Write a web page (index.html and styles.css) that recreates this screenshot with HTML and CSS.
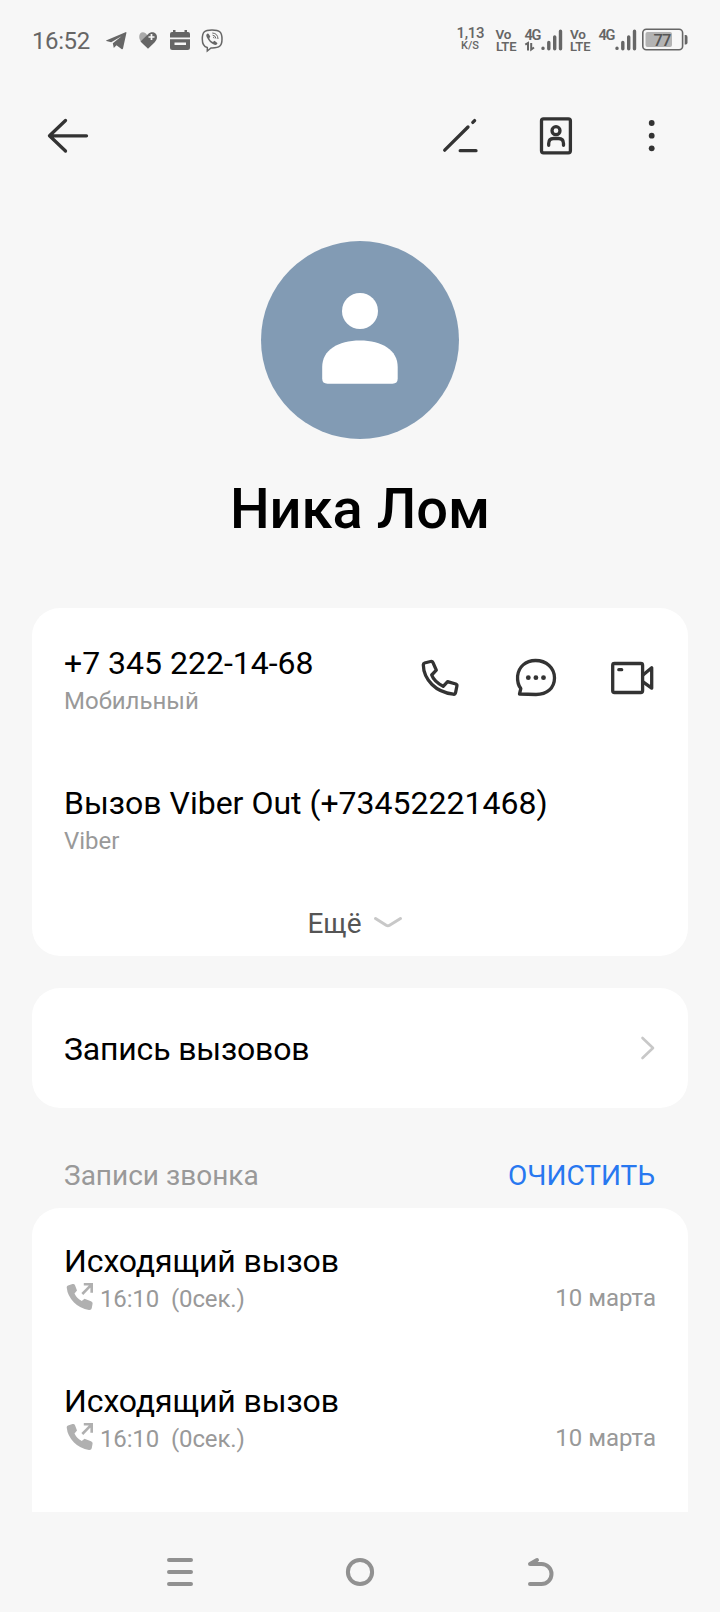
FILE: index.html
```html
<!DOCTYPE html>
<html lang="ru">
<head>
<meta charset="utf-8">
<title>Ника Лом</title>
<link rel="stylesheet" href="styles.css">
</head>
<body>
<div class="screen">
  <header class="status">
    <span class="clock">16:52</span>
    <svg class="notes" width="120" height="28" viewBox="104 26 120 28">
      <path d="M106 40.5L125.5 32.2Q126.6 31.8 126.4 33L123 48.6Q122.6 49.8 121.5 49L116.5 45.3L113.8 48L112.8 43.2L121.5 36.2L111.2 42.3L106.4 41.1Z" fill="#666"/>
      <path d="M148 36.5C145.500 30.500 139 31 139.200 37C139.300 41 143 43.500 145 45.500Z" fill="#aaa"/>
      <path d="M148 48.800L140.500 41.500L148 34.200C151.500 30.500 157 32.500 157 37C157 39.500 155.800 41 154.500 42.400Z" fill="#666"/>
      <path d="M148.500 37H154.500M151.500 34V40" stroke="#f7f7f7" stroke-width="1.700"/>
      <path d="M170 37.500V34Q170 32 172 32H173V30H175.500V32H184.500V30H187V32H188Q190 32 190 34V37.500Z" fill="#666"/>
      <path d="M170 39.300H190V47.500Q190 50 187.500 50H172.500Q170 50 170 47.500ZM174.500 42.500V45H186V42.500Z" fill="#666" fill-rule="evenodd"/>
      <path d="M212 29.900C204 29.900 202.300 32.500 202.300 39C202.300 44.500 203.600 46.700 207.300 47.600V51L211 47.900C220 48.200 222 45.600 222 39C222 32.500 220 29.900 212 29.900Z" fill="none" stroke="#666" stroke-width="1.500"/>
      <path d="M207.500 33.500C206 34.200 206 35.500 206.800 37.300C208.600 41 211 43.500 214.300 44.800C216.300 45.500 217.800 43.700 217.300 42.900L214.500 40.800L212.900 42C211 41.200 209.900 40 209.300 38.200L210.300 36.600L208.500 33.700Z" fill="#666"/>
      <path d="M212.300 33Q217.800 33.300 218 39M212.600 35.200Q215.700 35.600 215.900 38.500M213 37.200Q214 37.300 214.100 38.300" fill="none" stroke="#666" stroke-width="1"/>
    </svg>
    <svg class="radio" width="236" height="32" viewBox="454 24 236 32">
      <g class="tiny">
        <text x="456.500" y="38" font-size="15" textLength="28">1,13</text>
        <text x="461" y="49" font-size="11" textLength="18">K/S</text>
      </g>
      <g class="tiny bold">
        <text x="495.500" y="38.500" font-size="13.500" textLength="16">Vo</text>
        <text x="496" y="50.500" font-size="13" textLength="20.500">LTE</text>
        <text x="524.500" y="39.500" font-size="14.500" textLength="17">4G</text>
        <text x="570" y="38.500" font-size="13.500" textLength="16">Vo</text>
        <text x="570" y="50.500" font-size="13" textLength="20.500">LTE</text>
        <text x="598.500" y="39.500" font-size="14.500" textLength="17">4G</text>
      </g>
      <path d="M525.300 44.700L528 43V50.500M531.200 43V49.500L534 47.500" fill="none" stroke="#666" stroke-width="2"/>
      <g stroke="#666" stroke-width="3.400" stroke-linecap="round">
        <path d="M543 48.300V48.400M548.800 42.500V48.700M554.700 37V48.700M560.500 31.200V48.700"/>
        <path d="M617 48.300V48.400M622.800 42.500V48.700M628.700 37V48.700M634.500 31.200V48.700"/>
      </g>
      <rect x="642.800" y="29.200" width="39.800" height="20.600" rx="3.500" fill="none" stroke="#666" stroke-width="1.600"/>
      <rect x="645.500" y="32" width="26.500" height="15" rx="2" fill="#b3b3b3"/>
      <path d="M684.700 35H685.800Q687.500 35 687.500 37V42.500Q687.500 44.500 685.800 44.500H684.700Z" fill="#666"/>
      <text class="level" x="653.500" y="45.500" font-size="16.500" textLength="18">77</text>
    </svg>
  </header>

  <nav class="toolbar">
    <svg width="48" height="48" viewBox="44 112 48 48" class="line"><path d="M65.500 120.500L49.500 135.800L65.500 151M50 135.800H86.500"/></svg>
    <div class="tools">
      <svg width="48" height="48" viewBox="436 112 48 48" class="line"><path d="M444.700 150.200L468 127M472.800 122.400L474.600 120.600M460.200 150.700H476"/></svg>
      <svg width="48" height="48" viewBox="532 112 48 48" class="line"><rect x="541.500" y="118.800" width="28.900" height="34" rx="2"/><circle cx="556" cy="130.700" r="4"/><path d="M548.700 145.300V143.500Q548.700 138.500 553.500 138.500H558.500Q563.500 138.500 563.500 143.500V145.300"/></svg>
      <svg width="48" height="48" viewBox="628 112 48 48"><g fill="#333"><circle cx="651.700" cy="123" r="2.900"/><circle cx="651.700" cy="135.700" r="2.900"/><circle cx="651.700" cy="148.300" r="2.900"/></g></svg>
    </div>
  </nav>

  <section class="profile">
    <svg class="avatar" width="200" height="200" viewBox="260 240 200 200">
      <circle cx="360" cy="340" r="99" fill="#829bb4"/>
      <circle cx="360" cy="311" r="18" fill="#fff"/>
      <path d="M322.200 367C322.200 350 338 340.500 360 340.500C382 340.500 397.700 350 397.700 367V378.500Q397.700 383.700 392.500 383.700H327.500Q322.200 383.700 322.200 378.500Z" fill="#fff"/>
    </svg>
    <h1 class="name">Ника Лом</h1>
  </section>

  <section class="card numbers">
    <div class="row">
      <div class="info">
        <div class="primary">+7 345 222-14-68</div>
        <div class="secondary">Мобильный</div>
      </div>
      <div class="actions">
        <svg width="48" height="48" viewBox="416 654 48 48" class="line"><path d="M424.500 663L430.500 661.500Q432.300 661.100 433 662.700L436.300 670.200L431.700 675Q434 681.500 443.200 686.300L447.600 681.600L455.800 684Q457.200 684.600 456.900 686L455.600 692.500Q455.200 694.500 453.200 694.200Q440 692.500 432 684.500Q423.500 676 423.300 664.800Q423.300 663.300 424.500 663Z"/></svg>
        <svg width="48" height="48" viewBox="512 654 48 48" class="line"><path d="M519.500 694L520.800 688.600C518 685 517.200 681.500 517.600 676C518.500 667 525.500 660.500 535.500 660.500C546.500 660.500 554.500 668 554.500 678C554.500 688 547 694.500 536 694.500Z"/><g class="dots"><circle cx="528.300" cy="677.700" r="2.400"/><circle cx="535.900" cy="677.700" r="2.400"/><circle cx="543.500" cy="677.700" r="2.400"/></g></svg>
        <svg width="48" height="48" viewBox="608 654 48 48" class="line"><rect x="612.700" y="663.500" width="29.900" height="29" rx="1.800"/><path d="M618.800 669.700H621.700M643 675L651.700 667.800V688.200L643 681.800"/></svg>
      </div>
    </div>
    <div class="row">
      <div class="info">
        <div class="primary">Вызов Viber Out (+73452221468)</div>
        <div class="secondary">Viber</div>
      </div>
    </div>
    <div class="more">
      <span>Ещё</span>
      <svg width="32" height="16" viewBox="371 914 32 16" class="chevron"><path d="M374.500 918.500L385.200 925.200Q386.900 926.200 388.600 925.200L399.500 918.500"/></svg>
    </div>
  </section>

  <section class="card recording">
    <div class="primary">Запись вызовов</div>
    <svg width="16" height="26" viewBox="640 1035 16 26" class="chevron thin"><path d="M642.500 1038L653 1048L642.500 1058"/></svg>
  </section>

  <div class="heading">
    <span>Записи звонка</span>
    <span class="clear">ОЧИСТИТЬ</span>
  </div>

  <section class="card log">
    <div class="row">
      <div class="info">
        <div class="primary">Исходящий вызов</div>
        <div class="secondary call">
          <svg width="30" height="30" viewBox="65 1281 30 30"><path d="M68 1285.500L72.500 1284Q74.300 1283.500 75 1285.200L77 1290.500L74.500 1293.500Q76.500 1298 81.800 1301L84.500 1298.800L91 1301.300Q92.800 1302 92.600 1303.600L91.800 1308Q91.400 1310.300 89 1310Q80 1308.500 74 1302.500Q67.500 1296 66.700 1287.600Q66.600 1286 68 1285.500Z" fill="#b0b0b0"/><path d="M82.300 1294L91 1285.200M83.800 1284.300H91.700V1292.800" fill="none" stroke="#b0b0b0" stroke-width="2.600"/></svg>
          <span>16:10</span><span class="duration">(0сек.)</span>
        </div>
      </div>
      <time class="date">10 марта</time>
    </div>
    <div class="row">
      <div class="info">
        <div class="primary">Исходящий вызов</div>
        <div class="secondary call">
          <svg width="30" height="30" viewBox="65 1281 30 30"><path d="M68 1285.500L72.500 1284Q74.300 1283.500 75 1285.200L77 1290.500L74.500 1293.500Q76.500 1298 81.800 1301L84.500 1298.800L91 1301.300Q92.800 1302 92.600 1303.600L91.800 1308Q91.400 1310.300 89 1310Q80 1308.500 74 1302.500Q67.500 1296 66.700 1287.600Q66.600 1286 68 1285.500Z" fill="#b0b0b0"/><path d="M82.300 1294L91 1285.200M83.800 1284.300H91.700V1292.800" fill="none" stroke="#b0b0b0" stroke-width="2.600"/></svg>
          <span>16:10</span><span class="duration">(0сек.)</span>
        </div>
      </div>
      <time class="date">10 марта</time>
    </div>
  </section>

  <footer class="system">
    <svg width="40" height="40" viewBox="160 1552 40 40"><path d="M169 1560H191M169 1572H191M169 1584H191"/></svg>
    <svg width="40" height="40" viewBox="340 1552 40 40"><circle cx="360" cy="1572" r="12.100"/></svg>
    <svg width="40" height="40" viewBox="520 1552 40 40"><path d="M530 1584H541.500A10 10 0 0 0 541.500 1564H530L537 1560"/></svg>
  </footer>
</div>
</body>
</html>
```

FILE: styles.css
```css
* { box-sizing: border-box; }
body {
  margin: 0;
  background: #f7f7f7;
  color: #000;
  font-family: Roboto, "Noto Sans", sans-serif;
}
svg { display: block; flex: none; }
.screen {
  width: 720px;
  height: 1612px;
  display: flex;
  flex-direction: column;
  overflow: hidden;
}
.status {
  height: 80px;
  padding: 0 30px 0 32px;
  display: flex;
  align-items: center;
  color: #666;
}
.clock { width: 72px; padding-top: 1px; font-size: 24px; line-height: 28px; letter-spacing: -0.4px; }
.radio { margin-left: auto; }
.tiny { fill: #666; font-weight: 500; }
.bold { font-weight: 600; }
.level { fill: #555; font-weight: 500; }
.toolbar {
  height: 112px;
  padding: 0 44px;
  display: flex;
  align-items: center;
  justify-content: space-between;
}
.tools { display: flex; gap: 48px; }
.line {
  fill: none;
  stroke: #333;
  stroke-width: 3.3;
  stroke-linecap: round;
  stroke-linejoin: round;
}
.dots { fill: #333; stroke: none; }
.profile {
  height: 416px;
  padding-top: 48px;
  display: flex;
  flex-direction: column;
  align-items: center;
}
.name { margin: 36px 0 0; font-size: 56px; font-weight: 500; line-height: 66px; }
.card {
  margin: 0 32px;
  background: #fff;
  border-radius: 28px;
  flex: none;
}
.numbers { height: 348px; }
.row {
  height: 140px;
  padding: 36px 32px 0;
  display: flex;
  justify-content: space-between;
}
.primary { font-size: 32px; line-height: 38px; }
.secondary { margin-top: 3px; font-size: 24px; line-height: 32px; color: #999; }
.actions { display: flex; gap: 48px; padding-top: 10px; }
.more {
  height: 68px;
  padding-top: 19px;
  padding-right: 9px;
  display: flex;
  justify-content: center;
  gap: 10px;
  font-size: 28px;
  line-height: 34px;
  color: #555;
}
.more svg { margin-top: 7px; }
.chevron {
  fill: none;
  stroke: #c8c8c8;
  stroke-width: 3;
  stroke-linecap: round;
  stroke-linejoin: round;
}
.thin { stroke-width: 2.6; }
.recording {
  height: 120px;
  margin-top: 32px;
  padding: 0 32px;
  display: flex;
  align-items: center;
  justify-content: space-between;
}
.recording .primary { padding-top: 2px; letter-spacing: -0.18px; }
.heading {
  height: 100px;
  padding: 51px 65px 0 64px;
  display: flex;
  justify-content: space-between;
  font-size: 28px;
  line-height: 34px;
  color: #999;
}
.clear { color: #2878f0; }
.log { height: 304px; border-radius: 28px 28px 0 0; }
.log .row { padding-top: 34px; }
.log .primary { letter-spacing: -0.1px; }
.call { display: flex; align-items: flex-start; letter-spacing: -0.15px; }
.call svg { margin: -2px 5px 0 1px; }
.duration { margin-left: 12px; }
.date { padding-top: 40px; font-size: 24px; line-height: 32px; color: #999; }
.system {
  height: 100px;
  padding: 20px 160px 0;
  display: flex;
  align-items: center;
  justify-content: space-between;
  fill: none;
  stroke: #919191;
  stroke-width: 4;
  stroke-linecap: round;
  stroke-linejoin: round;
}
```
